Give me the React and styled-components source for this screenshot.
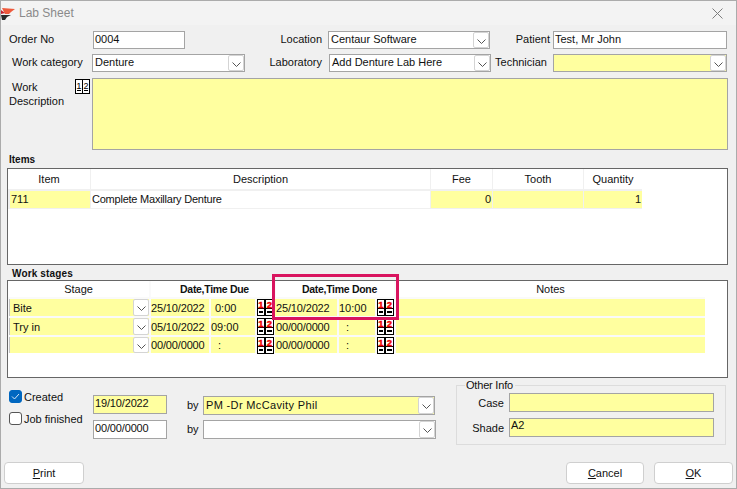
import React from "react";
import styled, { createGlobalStyle } from "styled-components";

const GlobalStyle = createGlobalStyle`
  html, body {
    margin: 0;
    padding: 0;
    background: #f0f0f0;
    overflow: hidden;
  }
  * {
    box-sizing: border-box;
  }
`;

const YELLOW = "#ffff9f";

const Chevron = () => (
  <svg width="9" height="5" viewBox="0 0 9 5" fill="none">
    <path d="M0.5 0.5 L4.5 4.5 L8.5 0.5" stroke="#555" strokeWidth="1" />
  </svg>
);

const Logo = () => (
  <svg width="15" height="13" viewBox="0 0 15 13">
    <path d="M1 1 L14 2 L10 5 L8 7 L4 7 Z" fill="#ee5a3c" />
    <path d="M0 8 L10 8 L6 10 L4 13 L1 13 Z" fill="#2a2a2a" />
    <path d="M0 3 L4 6 L0 7 Z" fill="#c8202c" />
  </svg>
);

const CloseIcon = () => (
  <svg width="11" height="11" viewBox="0 0 11 11" fill="none">
    <path d="M0.5 0.5 L10.5 10.5 M10.5 0.5 L0.5 10.5" stroke="#7d7d7d" strokeWidth="1" />
  </svg>
);

const NumberIcon = () => (
  <svg width="15" height="15" viewBox="0 0 15 15">
    <rect width="15" height="15" fill="#000" />
    <rect x="1" y="1" width="6" height="13" fill="#fff" />
    <rect x="8" y="1" width="6" height="13" fill="#fff" />
    <text x="4" y="10" fontSize="9.5" fontFamily="Liberation Sans" textAnchor="middle">1</text>
    <text x="11" y="10" fontSize="9" fontFamily="Liberation Sans" textAnchor="middle">2</text>
    <rect x="2" y="11" width="4" height="1" fill="#000" />
    <rect x="9" y="11" width="4" height="1" fill="#000" />
  </svg>
);

const DateIcon = () => (
  <svg width="17" height="17" viewBox="0 0 17 17">
    <rect width="17" height="17" fill="#000" />
    <rect x="1" y="1" width="6" height="8" fill="#fff" />
    <rect x="9" y="1" width="7" height="8" fill="#fff" />
    <rect x="1" y="10" width="6" height="6" fill="#fff" />
    <rect x="9" y="10" width="7" height="6" fill="#fff" />
    <text x="4" y="8.5" fontSize="9.5" fontWeight="bold" fill="#f00000" stroke="#f00000" strokeWidth="0.4" fontFamily="Liberation Sans" textAnchor="middle">1</text>
    <text x="12.5" y="8.5" fontSize="9.5" fontWeight="bold" fill="#f00000" stroke="#f00000" strokeWidth="0.4" fontFamily="Liberation Sans" textAnchor="middle">2</text>
    <rect x="2" y="12" width="4" height="2" fill="#000" />
    <rect x="10" y="12" width="5" height="2" fill="#000" />
  </svg>
);

const CheckMark = () => (
  <svg width="9" height="7" viewBox="0 0 9 7" fill="none">
    <path d="M1 3.5 L3.5 6 L8 1" stroke="#d8e8f8" strokeWidth="1" />
  </svg>
);

const Combo = ({ w, h = 18, bg, ls, children }) => (
  <ComboBox $w={w} $h={h} $bg={bg}>
    <ComboText $ls={ls}>{children}</ComboText>
    <ComboButton>
      <Chevron />
    </ComboButton>
  </ComboBox>
);

const stageRows = [
  { stage: "Bite", due: "25/10/2022", dueTime: "0:00", duePad: 4, done: "25/10/2022", doneTime: "10:00", donePad: 0 },
  { stage: "Try in", due: "05/10/2022", dueTime: "09:00", duePad: 0, done: "00/00/0000", doneTime: ":", donePad: 7 },
  { stage: "", due: "00/00/0000", dueTime: ":", duePad: 7, done: "00/00/0000", doneTime: ":", donePad: 7 },
];

export default function App() {
  return (
    <>
      <GlobalStyle />
      <Window>
        <TitleBar>
          <LogoSlot>
            <Logo />
          </LogoSlot>
          <Title>Lab Sheet</Title>
          <CloseSlot>
            <CloseIcon />
          </CloseSlot>
        </TitleBar>

        <Row $mt={6}>
          <Label $w={92} $pl={8}>Order No</Label>
          <Input $w={92}>0004</Input>
          <Label $w={137} $right>Location</Label>
          <Spacer $w={6} />
          <Combo w={162}>Centaur Software</Combo>
          <Label $w={60} $right>Patient</Label>
          <Spacer $w={3} />
          <Input $w={174}>Test, Mr John</Input>
        </Row>
        <Row $mt={5}>
          <Label $w={91} $pl={11}>Work category</Label>
          <Combo w={153}>Denture</Combo>
          <Label $w={77} $right>Laboratory</Label>
          <Spacer $w={7} />
          <Combo w={162}>Add Denture Lab Here</Combo>
          <Label $w={56} $right>Technician</Label>
          <Spacer $w={6} />
          <Combo w={174} bg={YELLOW} />
        </Row>
        <DescriptionRow>
          <DescriptionLabel>
            <span>&nbsp;Work</span>
            <span>Description</span>
          </DescriptionLabel>
          <IconSlot>
            <NumberIcon />
          </IconSlot>
          <DescriptionBox />
        </DescriptionRow>

        <SectionLabel $mt={3} $pl={8}>Items</SectionLabel>
        <TableBox $h={97}>
          <ItemsGrid>
            <HeadCell>Item</HeadCell>
            <HeadCell>Description</HeadCell>
            <HeadCell>Fee</HeadCell>
            <HeadCell>Tooth</HeadCell>
            <HeadCell>Quantity</HeadCell>
            <DataCell $bg={YELLOW} $ml={2}>711</DataCell>
            <DataCell $bg="#fff" $ls={-0.23}>Complete Maxillary Denture</DataCell>
            <DataCell $bg={YELLOW} $align="right">0</DataCell>
            <DataCell $bg={YELLOW} />
            <DataCell $bg={YELLOW} $align="right">1</DataCell>
          </ItemsGrid>
        </TableBox>

        <SectionLabel $mt={0} $pt={2} $pl={11} $ls={0.15}>Work stages</SectionLabel>
        <TableBox $h={98}>
          <StagesGrid>
            <HeadCell>Stage</HeadCell>
            <HeadCell $span={3} $bold $shift={4}>Date,Time Due</HeadCell>
            <HeadCell $span={3} $bold $shift={9}>Date,Time Done</HeadCell>
            <HeadCell>Notes</HeadCell>
            {stageRows.map((row, i) => (
              <React.Fragment key={i}>
                <StageCombo>
                  <StageText>{row.stage}</StageText>
                  <ComboButton>
                    <Chevron />
                  </ComboButton>
                </StageCombo>
                <DateCell>{row.due}</DateCell>
                <TimeCell $pl={row.duePad}>{row.dueTime}</TimeCell>
                <IconCell>
                  <DateIcon />
                </IconCell>
                <DateCell $ml={-1}>{row.done}</DateCell>
                <TimeCell $pl={row.donePad}>{row.doneTime}</TimeCell>
                <IconCell>
                  <DateIcon />
                </IconCell>
                <DataCell $bg={YELLOW} />
              </React.Fragment>
            ))}
          </StagesGrid>
          <Highlight />
        </TableBox>

        <BottomRow>
          <CheckColumn>
            <CheckRow>
              <CheckBox $on>
                <CheckMark />
              </CheckBox>
              Created
            </CheckRow>
            <CheckRow>
              <CheckBox />
              Job finished
            </CheckRow>
          </CheckColumn>
          <DateColumn>
            <Input $w={74} $h={19} $bg={YELLOW} $ls={-0.15} $pb={3}>19/10/2022</Input>
            <Input $w={74} $h={19} $ls={-0.15} $pb={3}>00/00/0000</Input>
          </DateColumn>
          <ByColumn>
            <ByRow>
              <ByLabel>by</ByLabel>
              <Combo w={232} h={19} bg={YELLOW} ls={0.35}>PM -Dr McCavity Phil</Combo>
            </ByRow>
            <ByRow>
              <ByLabel>by</ByLabel>
              <Combo w={233} h={19} />
            </ByRow>
          </ByColumn>
          <OtherInfo>
            <Legend>Other Info</Legend>
            <InfoRow>
              <InfoLabel>Case</InfoLabel>
              <Input $w={205} $h={19} $bg={YELLOW} />
            </InfoRow>
            <InfoRow>
              <InfoLabel>Shade</InfoLabel>
              <Input $w={205} $h={19} $bg={YELLOW} $pb={5}>A2</Input>
            </InfoRow>
          </OtherInfo>
        </BottomRow>

        <Footer>
          <Button $w={80}>
            <u>P</u>rint
          </Button>
          <FooterRight>
            <Button $w={78}>
              <u>C</u>ancel
            </Button>
            <Button $w={79}>
              <u>O</u>K
            </Button>
          </FooterRight>
        </Footer>
      </Window>
    </>
  );
}

const Window = styled.div`
  width: 737px;
  height: 489px;
  display: flex;
  flex-direction: column;
  background: #f0f0f0;
  border: 1px solid #ababab;
  font-family: "Liberation Sans", Arial, sans-serif;
  font-size: 11px;
  color: #111;
`;

const TitleBar = styled.div`
  height: 24px;
  display: flex;
  align-items: center;
  background: #f3f3f3;
`;

const LogoSlot = styled.div`
  width: 18px;
  display: flex;
  align-items: center;
`;

const Title = styled.div`
  flex: 1;
  font-size: 12px;
  color: #8a8a8a;
`;

const CloseSlot = styled.div`
  width: 24px;
  display: flex;
  align-items: center;
`;

const Row = styled.div`
  display: flex;
  align-items: center;
  margin-top: ${(p) => p.$mt || 0}px;
`;

const Spacer = styled.div`
  width: ${(p) => p.$w}px;
  flex: none;
`;

const Label = styled.div`
  width: ${(p) => p.$w}px;
  flex: none;
  padding-left: ${(p) => p.$pl || 0}px;
  padding-bottom: 2px;
  text-align: ${(p) => (p.$right ? "right" : "left")};
  white-space: nowrap;
`;

const Input = styled.div`
  width: ${(p) => p.$w}px;
  height: ${(p) => p.$h || 18}px;
  flex: none;
  display: flex;
  align-items: center;
  padding: 0 0 ${(p) => p.$pb ?? 2}px 1px;
  background: ${(p) => p.$bg || "#fff"};
  border: 1px solid #a4a4a4;
  letter-spacing: ${(p) => p.$ls || 0}px;
  white-space: nowrap;
`;

const ComboBox = styled.div`
  width: ${(p) => p.$w}px;
  height: ${(p) => p.$h}px;
  flex: none;
  display: flex;
  align-items: center;
  background: ${(p) => p.$bg || "#fff"};
  border: 1px solid #a4a4a4;
`;

const ComboText = styled.div`
  flex: 1;
  padding: 0 0 2px 2px;
  letter-spacing: ${(p) => p.$ls || 0}px;
  white-space: nowrap;
  overflow: hidden;
`;

const ComboButton = styled.div`
  width: 16px;
  height: 100%;
  flex: none;
  display: flex;
  align-items: center;
  justify-content: center;
  padding-top: 2px;
  background: #fff;
  border: 1px solid #d4d4d4;
  border-radius: 2px;
`;

const DescriptionRow = styled.div`
  display: flex;
  margin-top: 6px;
  height: 72px;
`;

const DescriptionLabel = styled.div`
  width: 74px;
  flex: none;
  display: flex;
  flex-direction: column;
  gap: 2px;
  padding: 3px 0 0 8px;
`;

const IconSlot = styled.div`
  width: 17px;
  flex: none;
  padding-top: 1px;
`;

const DescriptionBox = styled.div`
  width: 636px;
  background: ${YELLOW};
  border: 1px solid #a4a4a4;
`;

const SectionLabel = styled.div`
  height: 15px;
  margin-top: ${(p) => p.$mt}px;
  padding-top: ${(p) => p.$pt || 0}px;
  padding-left: ${(p) => p.$pl}px;
  font-size: 10px;
  line-height: 13px;
  font-weight: bold;
  letter-spacing: ${(p) => p.$ls || 0}px;
`;

const TableBox = styled.div`
  position: relative;
  width: 721px;
  height: ${(p) => p.$h}px;
  margin-left: 6px;
  background: #fff;
  border: 1px solid #666;
`;

const ItemsGrid = styled.div`
  display: inline-grid;
  grid-template-columns: 82px 339px 61px 90px 58px;
  grid-template-rows: 20px 17px;
  column-gap: 1px;
  row-gap: 2px;
  padding-bottom: 1px;
  background: #f0f0f0;
  vertical-align: top;
`;

const StagesGrid = styled.div`
  display: inline-grid;
  grid-template-columns: 141px 58px 44px 17px 61px 36px 17px 309px;
  grid-template-rows: 16px 17px 17px 16px;
  column-gap: 2px;
  row-gap: 2px;
  background: #fafafa;
  vertical-align: top;
`;

const HeadCell = styled.div`
  grid-column: span ${(p) => p.$span || 1};
  display: flex;
  align-items: center;
  justify-content: center;
  padding-left: ${(p) => p.$shift || 0}px;
  padding-bottom: 1px;
  background: #fff;
  font-size: ${(p) => (p.$bold ? "10.5px" : "11px")};
  font-weight: ${(p) => (p.$bold ? "bold" : "normal")};
  letter-spacing: ${(p) => (p.$bold ? "-0.3px" : "0")};
  white-space: nowrap;
`;

const DataCell = styled.div`
  display: flex;
  align-items: center;
  justify-content: ${(p) => (p.$align === "right" ? "flex-end" : "flex-start")};
  margin-left: ${(p) => p.$ml || 0}px;
  padding: 0 1px 2px;
  background: ${(p) => p.$bg};
  letter-spacing: ${(p) => p.$ls || 0}px;
  white-space: nowrap;
`;

const DateCell = styled.div`
  display: flex;
  align-items: center;
  margin-left: ${(p) => p.$ml || 0}px;
  padding-left: ${(p) => (p.$ml ? 1 : 0)}px;
  background: ${YELLOW};
  letter-spacing: -0.15px;
  white-space: nowrap;
`;

const TimeCell = styled.div`
  display: flex;
  align-items: center;
  padding-left: ${(p) => p.$pl}px;
  background: ${YELLOW};
  white-space: nowrap;
`;

const StageCombo = styled.div`
  display: flex;
  align-items: center;
  margin-left: 1px;
  padding-left: 1px;
  background: ${YELLOW};
  border-left: 1px solid #c4c4c4;
`;

const StageText = styled.div`
  flex: 1;
  padding-left: 2px;
  white-space: nowrap;
  overflow: hidden;
`;

const IconCell = styled.div`
  display: flex;
  align-items: center;
  background: #fff;
`;

const Highlight = styled.div`
  position: absolute;
  left: 264px;
  top: -7px;
  width: 127px;
  height: 46px;
  border: 3px solid #d9145f;
  pointer-events: none;
`;

const BottomRow = styled.div`
  display: flex;
  margin-top: 7px;
  height: 60px;
`;

const CheckColumn = styled.div`
  width: 84px;
  margin-left: 8px;
  flex: none;
  display: flex;
  flex-direction: column;
  gap: 9px;
  padding-top: 5px;
`;

const CheckRow = styled.div`
  height: 13px;
  display: flex;
  align-items: center;
  gap: 2px;
  white-space: nowrap;
`;

const CheckBox = styled.div`
  width: 13px;
  height: 13px;
  flex: none;
  display: flex;
  align-items: center;
  justify-content: center;
  background: ${(p) => (p.$on ? "#0067c0" : "#fff")};
  border: 1px solid ${(p) => (p.$on ? "#0067c0" : "#555")};
  border-radius: 3px;
`;

const DateColumn = styled.div`
  width: 74px;
  flex: none;
  display: flex;
  flex-direction: column;
  gap: 6px;
  padding-top: 10px;
`;

const ByColumn = styled.div`
  width: 269px;
  flex: none;
  display: flex;
  flex-direction: column;
  gap: 5px;
  margin-left: 20px;
  padding-top: 11px;
`;

const ByRow = styled.div`
  display: flex;
  align-items: center;
`;

const ByLabel = styled.div`
  width: 16px;
  flex: none;
  padding-bottom: 2px;
`;

const OtherInfo = styled.div`
  position: relative;
  width: 270px;
  height: 60px;
  flex: none;
  display: flex;
  flex-direction: column;
  gap: 6px;
  padding-top: 7px;
  border: 1px solid #dcdcdc;
`;

const Legend = styled.div`
  position: absolute;
  left: 8px;
  top: -7px;
  padding: 0 2px 0 1px;
  background: #f0f0f0;
  letter-spacing: -0.2px;
  line-height: 12px;
`;

const InfoRow = styled.div`
  display: flex;
  align-items: center;
  gap: 5px;
`;

const InfoLabel = styled.div`
  width: 47px;
  flex: none;
  text-align: right;
`;

const Footer = styled.div`
  display: flex;
  justify-content: space-between;
  margin-top: auto;
  padding: 0 3px 4px 3px;
`;

const FooterRight = styled.div`
  display: flex;
  gap: 10px;
`;

const Button = styled.div`
  width: ${(p) => p.$w}px;
  height: 22px;
  display: flex;
  align-items: center;
  justify-content: center;
  white-space: pre;
  background: #fff;
  border: 1px solid #cfcfcf;
  border-radius: 4px;
`;
